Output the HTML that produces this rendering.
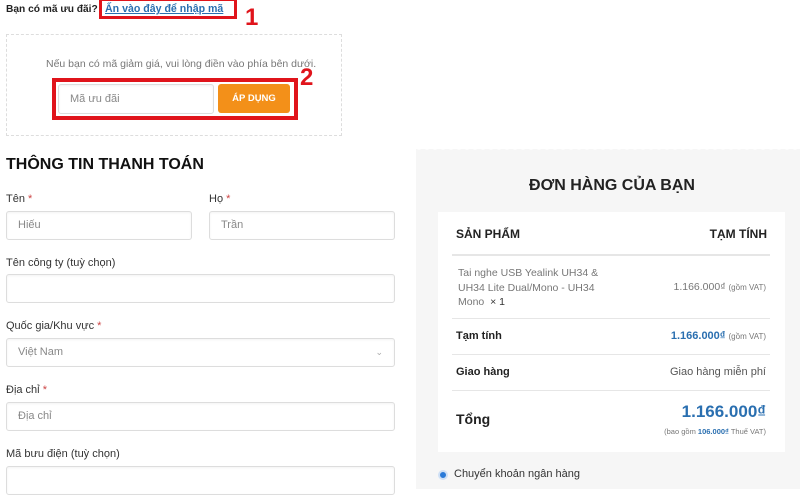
<!DOCTYPE html>
<html><head><meta charset="utf-8"><style>
*{margin:0;padding:0;box-sizing:border-box}
body{width:800px;height:485px;overflow:hidden;background:#fff;font-family:"Liberation Sans","DejaVu Sans",sans-serif;position:relative;color:#333}
.a{position:absolute;white-space:nowrap}
.inp{position:absolute;border:1px solid #ddd;border-radius:3px;background:#fff;box-shadow:inset 0 1px 2px rgba(0,0,0,.05);font-size:11px;color:#888;padding-left:11px;line-height:27px}
.lbl{position:absolute;font-size:11px;color:#333}
.lbl b{color:#c44;font-weight:normal}
.hr{position:absolute;left:452px;width:318px;height:1px;background:#e6e6e6}
</style></head><body>
<div class="a" style="left:6px;top:4px;font-size:10.2px;font-weight:bold;color:#222">Bạn có mã ưu đãi?</div>
<div class="a" style="left:105px;top:3px;font-size:10.6px;font-weight:bold;color:#2a6fb0;text-decoration:underline">Ấn vào đây để nhập mã</div>
<div class="a" style="left:99px;top:-2px;width:138px;height:21px;border:3px solid #e0141b"></div>
<div class="a" style="left:245px;top:4px;font-size:24px;font-weight:bold;color:#e0141b">1</div>
<div class="a" style="left:6px;top:34px;width:336px;height:102px;border:1px dashed #ddd"></div>
<div class="a" style="left:46px;top:58px;font-size:10.5px;color:#777">Nếu bạn có mã giảm giá, vui lòng điền vào phía bên dưới.</div>
<div class="a" style="left:52px;top:78px;width:246px;height:42px;border:4px solid #e0141b"></div>
<div class="inp" style="left:58px;top:84px;width:156px;height:30px;line-height:28px;color:#888">Mã ưu đãi</div>
<div class="a" style="left:218px;top:84px;width:72px;height:29px;background:#f39019;border-radius:3px;color:#fff;font-size:9.5px;font-weight:bold;text-align:center;line-height:29px">ÁP DỤNG</div>
<div class="a" style="left:300px;top:64px;font-size:24px;font-weight:bold;color:#e0141b">2</div>

<div class="a" style="left:6px;top:156px;font-size:16px;font-weight:bold;color:#111">THÔNG TIN THANH TOÁN</div>
<div class="lbl" style="left:6px;top:193px">Tên <b>*</b></div>
<div class="lbl" style="left:209px;top:193px">Họ <b>*</b></div>
<div class="inp" style="left:6px;top:211px;width:186px;height:29px">Hiếu</div>
<div class="inp" style="left:209px;top:211px;width:186px;height:29px">Trần</div>
<div class="lbl" style="left:6px;top:257px">Tên công ty (tuỳ chọn)</div>
<div class="inp" style="left:6px;top:274px;width:389px;height:29px"></div>
<div class="lbl" style="left:6px;top:320px">Quốc gia/Khu vực <b>*</b></div>
<div class="inp" style="left:6px;top:338px;width:389px;height:29px">Việt Nam<span style="position:absolute;right:11px;top:0;font-size:9px;color:#aaa">&#8964;</span></div>
<div class="lbl" style="left:6px;top:384px">Địa chỉ <b>*</b></div>
<div class="inp" style="left:6px;top:402px;width:389px;height:29px">Địa chỉ</div>
<div class="lbl" style="left:6px;top:448px">Mã bưu điện (tuỳ chọn)</div>
<div class="inp" style="left:6px;top:466px;width:389px;height:29px"></div>

<div class="a" style="left:416px;top:149px;width:384px;height:340px;background:#f6f6f6"></div>
<div class="a" style="left:416px;top:147px;width:384px;height:5px;background:radial-gradient(circle at 3px 0,#fff 2.5px,transparent 3px) 0 0/8px 5px repeat-x"></div>
<div class="a" style="left:416px;top:177px;width:392px;text-align:center;font-size:16px;font-weight:bold;color:#222">ĐƠN HÀNG CỦA BẠN</div>
<div class="a" style="left:438px;top:212px;width:347px;height:240px;background:#fff"></div>
<div class="a" style="left:456px;top:227px;font-size:12px;font-weight:bold;color:#222">SẢN PHẨM</div>
<div class="a" style="right:33px;top:227px;font-size:12px;font-weight:bold;color:#222">TẠM TÍNH</div>
<div class="hr" style="top:254px;height:2px"></div>
<div class="a" style="left:458px;top:266px;font-size:10.5px;color:#777;line-height:14.5px">Tai nghe USB Yealink UH34 &amp;<br>UH34 Lite Dual/Mono - UH34<br>Mono &nbsp;<span style="color:#333">× 1</span></div>
<div class="a" style="right:34px;top:281px;font-size:10.5px;color:#777">1.166.000₫ <span style="font-size:8px">(gồm VAT)</span></div>
<div class="hr" style="top:318px"></div>
<div class="a" style="left:456px;top:330px;font-size:11px;font-weight:bold;color:#222">Tạm tính</div>
<div class="a" style="right:34px;top:330px;font-size:11px;color:#777"><b style="color:#2a6fb0">1.166.000₫</b> <span style="font-size:8px">(gồm VAT)</span></div>
<div class="hr" style="top:354px"></div>
<div class="a" style="left:456px;top:366px;font-size:11px;font-weight:bold;color:#222">Giao hàng</div>
<div class="a" style="right:34px;top:366px;font-size:11px;color:#555">Giao hàng miễn phí</div>
<div class="hr" style="top:390px"></div>
<div class="a" style="left:456px;top:411px;font-size:14px;font-weight:bold;color:#222">Tổng</div>
<div class="a" style="right:34px;top:402px;font-size:17px;font-weight:bold;color:#2a6fb0">1.166.000₫</div>
<div class="a" style="right:34px;top:427px;font-size:7.5px;color:#777">(bao gồm <b style="color:#2a6fb0">106.000₫</b> Thuế VAT)</div>
<div class="a" style="left:438px;top:470px;width:10px;height:10px;border-radius:50%;border:2px solid #cfe0f5;background:#2a7ad8"></div>
<div class="a" style="left:454px;top:468px;font-size:11px;color:#333">Chuyển khoản ngân hàng</div>
</body></html>
